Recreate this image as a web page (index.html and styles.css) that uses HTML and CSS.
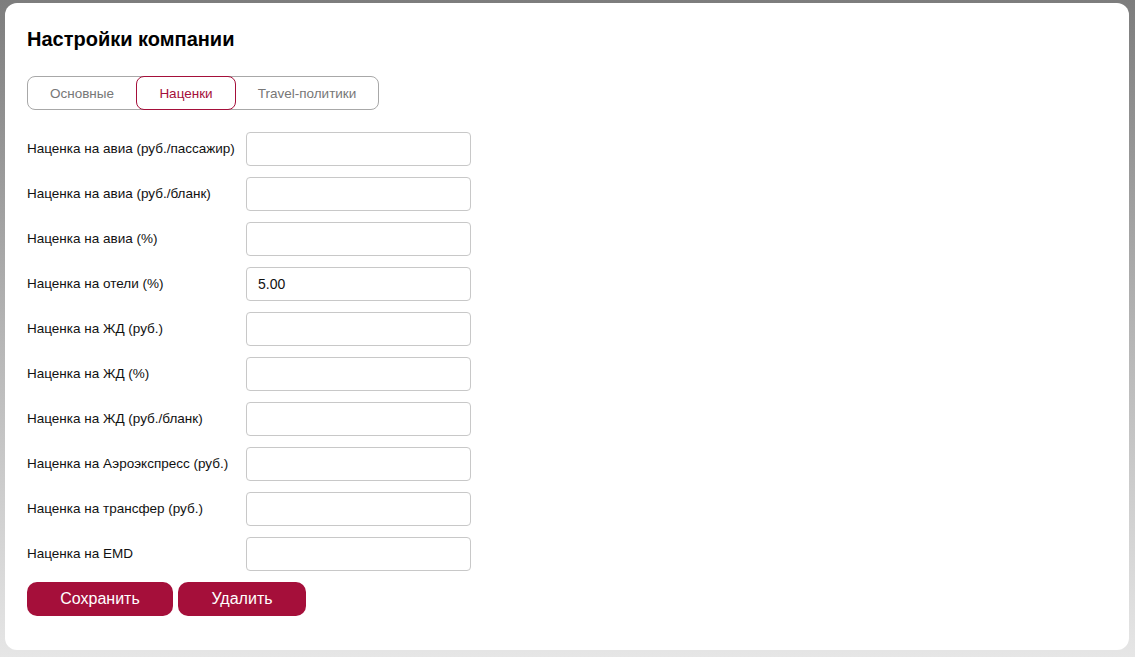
FILE: index.html
```html
<!DOCTYPE html>
<html lang="ru">
<head>
<meta charset="utf-8">
<link rel="stylesheet" href="styles.css">
</head>
<body>
<div class="card">
  <h1 class="title">Настройки компании</h1>
  <div class="tabs">
    <div class="tab tab-1">Основные</div>
    <div class="tab tab-2 active">Наценки</div>
    <div class="tab tab-3">Travel-политики</div>
  </div>
  <form class="form">
    <div class="row"><label class="label">Наценка на авиа (руб./пассажир)</label><input class="input" type="text"></div>
    <div class="row"><label class="label">Наценка на авиа (руб./бланк)</label><input class="input" type="text"></div>
    <div class="row"><label class="label">Наценка на авиа (%)</label><input class="input" type="text"></div>
    <div class="row"><label class="label">Наценка на отели (%)</label><input class="input" type="text" value="5.00"></div>
    <div class="row"><label class="label">Наценка на ЖД (руб.)</label><input class="input" type="text"></div>
    <div class="row"><label class="label">Наценка на ЖД (%)</label><input class="input" type="text"></div>
    <div class="row"><label class="label">Наценка на ЖД (руб./бланк)</label><input class="input" type="text"></div>
    <div class="row"><label class="label">Наценка на Аэроэкспресс (руб.)</label><input class="input" type="text"></div>
    <div class="row"><label class="label">Наценка на трансфер (руб.)</label><input class="input" type="text"></div>
    <div class="row"><label class="label">Наценка на EMD</label><input class="input" type="text"></div>
    <div class="actions">
      <button type="button" class="btn btn-save">Сохранить</button>
      <button type="button" class="btn btn-delete">Удалить</button>
    </div>
  </form>
</div>
</body>
</html>
```
FILE: styles.css
```css
html, body {
  margin: 0;
  padding: 0;
  height: 100%;
}
body {
  background: linear-gradient(to bottom, #7d7d7d 0%, #b4b4b4 50%, #e6e6e6 100%);
  font-family: "Liberation Sans", Arial, sans-serif;
  padding: 3px 6px 7px 5px;
  box-sizing: border-box;
}
.card {
  background: #fff;
  border-radius: 12px;
  height: 100%;
  box-sizing: border-box;
  padding: 24px 22px 0 22px;
}
.title {
  margin: 0;
  font-size: 20px;
  font-weight: bold;
  color: #000;
  line-height: 24px;
}
.tabs {
  display: inline-flex;
  margin-top: 25px;
  border: 1px solid #a8a8a8;
  border-radius: 8px;
  height: 34px;
  box-sizing: border-box;
}
.tab {
  display: flex;
  align-items: center;
  justify-content: center;
  font-size: 13.5px;
  color: #777;
  box-sizing: border-box;
  height: 34px;
  margin-top: -1px;
}
.tab-1 { width: 108px; }
.tab-2 { width: 100px; }
.tab-3 { width: 142px; }
.tab.active {
  border: 1px solid #a50f3a;
  border-radius: 8px;
  color: #a50f3a;
}
.form {
  margin-top: 22px;
  display: flex;
  flex-direction: column;
  gap: 11px;
}
.row {
  display: flex;
  align-items: center;
}
.label {
  width: 219px;
  font-size: 13.5px;
  line-height: 16px;
  margin-top: -1px;
  color: #111;
}
.input {
  width: 225px;
  height: 34px;
  box-sizing: border-box;
  border: 1px solid #c8c8c8;
  border-radius: 4px;
  padding: 0 11px;
  font-family: "Liberation Sans", Arial, sans-serif;
  font-size: 14px;
  color: #111;
  outline: none;
  margin: 0;
}
.actions {
  display: flex;
  gap: 5px;
  margin-top: 0;
}
.btn {
  height: 34px;
  border: none;
  border-radius: 10px;
  background: #a50f3a;
  color: #fff;
  font-family: "Liberation Sans", Arial, sans-serif;
  font-size: 16px;
  padding: 0;
  cursor: pointer;
}
.btn-save { width: 146px; }
.btn-delete { width: 128px; }
```
